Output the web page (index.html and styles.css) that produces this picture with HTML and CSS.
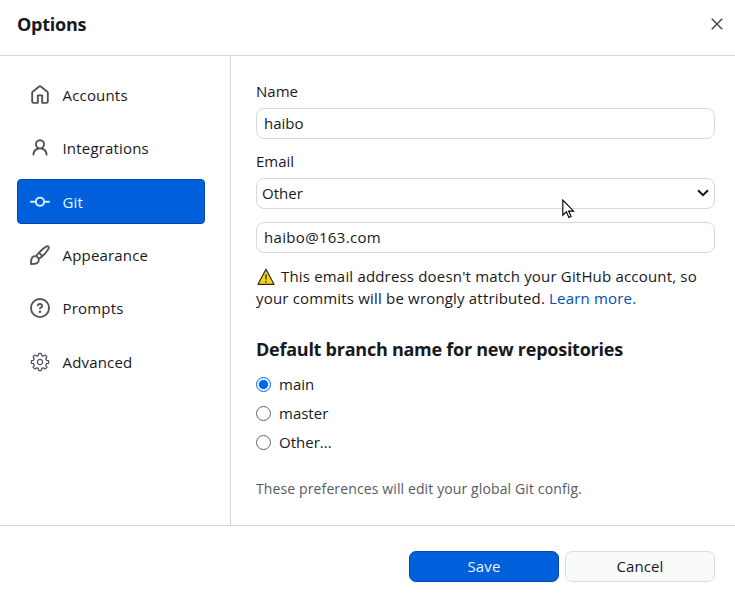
FILE: index.html
```html
<!DOCTYPE html>
<html lang="en">
<head>
<meta charset="utf-8">
<title>Options</title>
<link rel="stylesheet" href="styles.css">
</head>
<body>
<div class="dialog">
  <header class="header">
    <h1>Options</h1>
    <button class="close" aria-label="Close"><svg width="12" height="12" viewBox="0 0 12 12"><path d="M.8.8l10.4 10.4M11.2.8L.8 11.2"/></svg></button>
  </header>
  <div class="body">
    <nav class="nav">
      <a class="item"><svg class="icon" viewBox="0 0 16 16"><path d="M6.906.664a1.749 1.749 0 0 1 2.187 0l5.25 4.2c.415.332.657.835.657 1.367v7.019A1.75 1.75 0 0 1 13.25 15h-3.5a.75.75 0 0 1-.75-.75V9H7v5.25a.75.75 0 0 1-.75.75h-3.5A1.75 1.75 0 0 1 1 13.25V6.23c0-.531.242-1.034.657-1.366l5.25-4.2Zm1.25 1.171a.25.25 0 0 0-.312 0l-5.25 4.2a.25.25 0 0 0-.094.196v7.019c0 .138.112.25.25.25H5.5V8.25a.75.75 0 0 1 .75-.75h3.5a.75.75 0 0 1 .75.75v5.25h2.75a.25.25 0 0 0 .25-.25V6.23a.25.25 0 0 0-.094-.195Z"/></svg><span>Accounts</span></a>
      <a class="item"><svg class="icon" viewBox="0 0 16 16"><path d="M10.561 8.073a6.005 6.005 0 0 1 3.432 5.142.75.75 0 1 1-1.498.07 4.5 4.5 0 0 0-8.99 0 .75.75 0 0 1-1.498-.07 6.004 6.004 0 0 1 3.431-5.142 3.999 3.999 0 1 1 5.123 0ZM10.5 5a2.5 2.5 0 1 0-5 0 2.5 2.5 0 0 0 5 0Z"/></svg><span>Integrations</span></a>
      <a class="item selected"><svg class="icon" viewBox="0 0 16 16"><path d="M11.93 8.5a4.002 4.002 0 0 1-7.86 0H.75a.75.75 0 0 1 0-1.5h3.32a4.002 4.002 0 0 1 7.86 0h3.32a.75.75 0 0 1 0 1.5Zm-1.43-.75a2.5 2.5 0 1 0-5 0 2.5 2.5 0 0 0 5 0Z"/></svg><span>Git</span></a>
      <a class="item"><svg class="icon" viewBox="0 0 16 16"><path d="M11.134 1.535c.7-.509 1.416-.942 2.076-1.155.649-.21 1.463-.267 2.069.34.603.601.568 1.411.368 2.07-.202.668-.624 1.39-1.125 2.096-1.011 1.424-2.496 2.987-3.775 4.249-1.098 1.084-2.132 1.839-3.04 2.3a3.744 3.744 0 0 1-1.055 3.217c-.431.431-1.065.691-1.657.861-.614.177-1.294.287-1.914.357A21.151 21.151 0 0 1 .797 16H.743a.75.75 0 0 1-.743-.743v-.054a21.25 21.25 0 0 1 .13-2.284c.067-.647.187-1.287.358-1.914.17-.591.43-1.226.86-1.657a3.746 3.746 0 0 1 3.227-1.054c.466-.893 1.225-1.907 2.314-2.982 1.271-1.255 2.833-2.75 4.245-3.777ZM1.62 13.089c-.051.464-.086.929-.104 1.395.466-.018.932-.053 1.396-.104a10.511 10.511 0 0 0 1.668-.309c.526-.151.856-.325 1.011-.48a2.25 2.25 0 1 0-3.182-3.182c-.155.155-.329.485-.48 1.01a10.515 10.515 0 0 0-.309 1.67Zm10.396-10.34c-1.224.89-2.605 2.189-3.822 3.384l1.718 1.718c1.21-1.205 2.51-2.597 3.387-3.833.47-.662.78-1.227.912-1.662.134-.444.032-.551.009-.575h-.001V1.78c-.014-.014-.113-.113-.548.027-.432.14-.995.462-1.655.942Zm-4.832 7.266-.001.001a9.859 9.859 0 0 0 1.63-1.142L7.155 7.216a9.7 9.7 0 0 0-1.161 1.607c.482.302.889.71 1.19 1.192Z"/></svg><span>Appearance</span></a>
      <a class="item"><svg class="icon" viewBox="0 0 16 16"><path d="M0 8a8 8 0 1 1 16 0A8 8 0 0 1 0 8Zm8-6.5a6.5 6.5 0 1 0 0 13 6.5 6.5 0 0 0 0-13ZM6.92 6.085h.001a.749.749 0 1 1-1.342-.67c.169-.339.436-.701.849-.977C6.845 4.16 7.369 4 8 4a2.756 2.756 0 0 1 1.637.525c.503.377.863.965.863 1.725 0 .448-.115.83-.329 1.15-.205.307-.47.513-.692.662-.109.072-.22.138-.313.195l-.006.004a6.24 6.24 0 0 0-.26.16.952.952 0 0 0-.276.245.75.75 0 0 1-1.248-.832c.184-.264.42-.489.692-.661.103-.067.207-.132.313-.195l.007-.004c.1-.061.182-.11.258-.161a.969.969 0 0 0 .277-.245C8.96 6.514 9 6.427 9 6.25a.612.612 0 0 0-.262-.525A1.27 1.27 0 0 0 8 5.5c-.369 0-.595.09-.74.187a1.01 1.01 0 0 0-.34.398ZM9 11a1 1 0 1 1-2 0 1 1 0 0 1 2 0Z"/></svg><span>Prompts</span></a>
      <a class="item"><svg class="icon gear" viewBox="-10 -10 20 20"><path d="M-1.35-8.49Q0-8.8 1.35-8.49L1.73-6.47 3.35-5.8 5.05-6.96Q6.3-6.3 6.96-5.05L5.8-3.35 6.47-1.73 8.49-1.35Q8.8 0 8.49 1.35L6.47 1.73 5.8 3.35 6.96 5.05Q6.3 6.3 5.05 6.96L3.35 5.8 1.73 6.47 1.35 8.49Q0 8.8-1.35 8.49L-1.73 6.47-3.35 5.8-5.05 6.96Q-6.3 6.3-6.96 5.05L-5.8 3.35-6.47 1.73-8.49 1.35Q-8.8 0-8.49-1.35L-6.47-1.73-5.8-3.35-6.96-5.05Q-6.3-6.3-5.05-6.96L-3.35-5.8-1.73-6.47Z"/><circle r="2.6"/></svg><span>Advanced</span></a>
    </nav>
    <main class="content">
      <label class="label" for="name">Name</label>
      <input class="field" id="name" value="haibo">
      <label class="label" for="email">Email</label>
      <div class="field select"><span>Other</span><svg width="12" height="8" viewBox="0 0 12 8"><path d="M1 1.2l5 5 5-5"/></svg>
        <svg class="cursor" width="13" height="20" viewBox="0 0 13 20"><path d="M.8 1v15.2l3.6-3.4 2.5 5.7 2.2-1-2.5-5.4h5z"/></svg>
      </div>
      <input class="field address" aria-label="Email address" value="haibo@163.com">
      <p class="warning"><svg class="alert" width="18" height="17" viewBox="0 0 18 17"><path class="sign" d="M9 1.2L17 16.3H1z"/><path class="bang" d="M9 6.3v5.2M9 12.8v1.7"/></svg><span>This email address doesn't match your GitHub account, so</span><br><span>your commits will be wrongly attributed. <a>Learn more.</a></span></p>
      <h2>Default branch name for new repositories</h2>
      <label class="radio"><i class="dot on"></i>main</label>
      <label class="radio"><i class="dot"></i>master</label>
      <label class="radio"><i class="dot"></i>Other...</label>
      <p class="note">These preferences will edit your global Git config.</p>
    </main>
  </div>
  <footer class="footer">
    <button class="btn primary">Save</button>
    <button class="btn">Cancel</button>
  </footer>
</div>
</body>
</html>
```
FILE: styles.css
```css
* { box-sizing: border-box; }
body { margin: 0; background: #fff; color: #17191c; font: 15px/22px "Open Sans", "Noto Sans", sans-serif; }
h1, h2, p { margin: 0; }
button, input { font: inherit; color: inherit; letter-spacing: inherit; }
.dialog { width: 735px; height: 598px; display: flex; flex-direction: column; overflow: hidden; }
.header { height: 56px; border-bottom: 1px solid #d4d6d9; display: flex; justify-content: space-between; padding: 13px 12px 0 17px; }
h1 { font-size: 18px; line-height: 22px; font-weight: 700; letter-spacing: -.25px; }
.close { border: 0; background: none; padding: 0; width: 12px; height: 22px; display: flex; align-items: center; }
.close path { stroke: #45484d; stroke-width: 1.5; }
.body { height: 469px; display: flex; }
.nav { width: 231px; border-right: 1px solid #d4d6d9; padding: 16.4px 25px 0 17px; display: flex; flex-direction: column; gap: 8.4px; letter-spacing: .18px; }
.item { height: 45px; flex: none; display: flex; align-items: center; padding-left: 13px; gap: 12.5px; border-radius: 4px; }
.icon { width: 20px; height: 20px; fill: #50545a; }
.gear { fill: none; stroke: #50545a; stroke-width: 1.3; stroke-linejoin: round; }
.selected { background: #0060dc; color: #e8f8ff; border: 1px solid #0049b0; padding-left: 12px; }
.selected .icon { fill: #d8f4ff; }
.content { flex: 1; padding: 24px 20px 0 25px; display: flex; flex-direction: column; }
.label { height: 22px; margin-bottom: 6px; }
.field { width: 459px; height: 31px; border: 1px solid #d6d8db; border-radius: 8px; background: #fff; padding: 0 7px 2px; margin-bottom: 11px; outline: 0; }
.select { position: relative; display: flex; align-items: center; justify-content: space-between; padding: 0 5px 1px; margin-bottom: 13px; }
.select path { fill: none; stroke: #15171a; stroke-width: 2; }
.cursor { position: absolute; left: 305px; top: 20px; z-index: 1; }
.select .cursor path { fill: #fff; stroke: #000; stroke-width: 1.1; }
.address { margin-bottom: 12px; letter-spacing: .33px; }
.warning { height: 44px; white-space: nowrap; letter-spacing: .18px; }
.alert { vertical-align: -3px; margin: 0 6px 0 1px; }
.sign { fill: #ffd21a; stroke: #26282a; stroke-width: 1.2; stroke-linejoin: round; }
.bang { fill: none; stroke: #26282a; stroke-width: 1.3; }
.warning a { color: #0550ae; }
h2 { font-size: 18px; line-height: 24px; font-weight: 700; letter-spacing: -.25px; margin: 28px 0 12px; white-space: nowrap; }
.radio { height: 22px; margin-bottom: 7px; display: flex; align-items: center; gap: 8px; }
.dot { width: 15px; height: 15px; border: 1px solid #606469; border-radius: 50%; position: relative; top: .5px; }
.on { border: 1.5px solid #0068e8; background: radial-gradient(circle, #0068e8 4.2px, #e6f7ff 4.9px); }
.note { font-size: 14px; color: #565b61; margin-top: 18px; letter-spacing: .12px; }
.footer { border-top: 1px solid #d4d6d9; height: 73px; display: flex; justify-content: flex-end; gap: 6px; padding: 25px 20px 0 0; }
.btn { width: 150px; height: 31px; padding: 0 0 2px; border: 1px solid #dcdfe1; border-radius: 7px; background: #f9fbfb; letter-spacing: .1px; }
.primary { background: #0060dc; border-color: #0049b0; color: #e8f8ff; }
```
